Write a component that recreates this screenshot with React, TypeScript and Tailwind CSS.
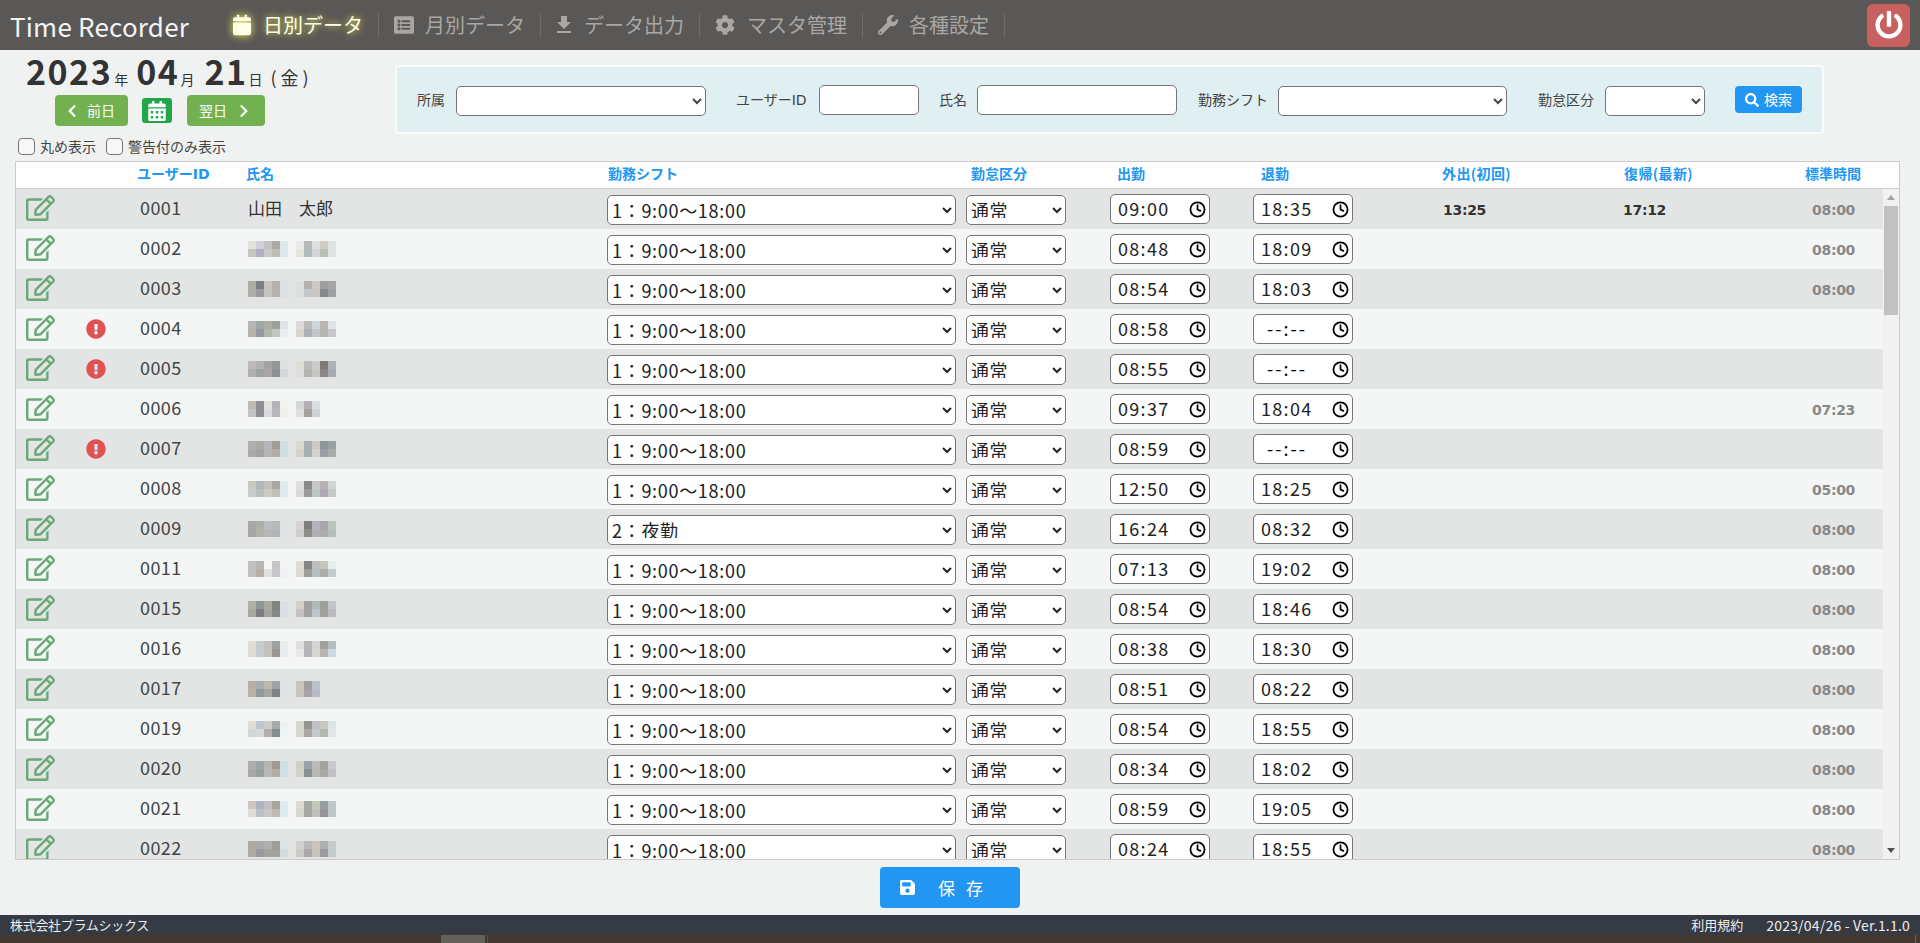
import { FaCalendar, FaListAlt, FaCog, FaWrench, FaPowerOff, FaChevronLeft, FaChevronRight, FaCalendarAlt, FaSearch, FaRegEdit, FaExclamationCircle, FaSave } from 'react-icons/fa';
import { MdFileDownload } from 'react-icons/md';
import { Clock } from 'lucide-react';

type Row = {
  id: string;
  name?: string;
  warn?: boolean;
  shift?: string;
  start: string;
  end: string;
  out?: string;
  back?: string;
  std: string;
  mosaic?: string[];
};

const SHIFT1 = '1：9:00～18:00';

const rows: Row[] = [
  { id: '0001', name: '山田　太郎', start: '09:00', end: '18:35', out: '13:25', back: '17:12', std: '08:00' },
  { id: '0002', start: '08:48', end: '18:09', std: '08:00', mosaic: ['e2e1dc cfd0db c4c3c3 aea8a4 dde9ec', 'c6c5bf b0b1c2 cbcbc6 c0bcb6 dde9ec', 'eaeae8 b6b9b9 dedfde cccbc4 dde1e0', 'e6e5da b0bcbe d0d6d8 b8bdb6 dfe3e2'] },
  { id: '0003', start: '08:54', end: '18:03', std: '08:00', mosaic: ['aeaca6 7b7f82 c6c5c3 b4b3ab dde1e6', 'afaeaa 9a9a9f c4c4c2 b4b4ac dcdfe3', 'dddedf b5b2af cccac8 a09e9f a5a6a9', 'dddee0 c4c7ca c8c5c2 868a8e 9a9fa3'] },
  { id: '0004', warn: true, start: '08:58', end: '--:--', std: '', mosaic: ['b9b7b4 a0a5a8 acaea4 9ca09a e0e4e8', 'b6b3ae 9599a2 b3b5af c3c5bf eaeef2', 'dedad9 bdb9b6 cfd8d8 b9b7b1 e1e5e9', 'd9d5cc adb0b8 c2c6c9 b5b5b3 c4c8cc'] },
  { id: '0005', warn: true, start: '08:55', end: '--:--', std: '', mosaic: ['bdb9ba b3b2b7 a3a3a3 969897 dfe1df', 'b0b0b0 a0a3a0 aca5a8 8f9093 d5d7db', 'ddddd7 b8bbb9 cbcbc7 7f7a76 adb2b7', 'dddddd b2b4b2 c6c6c2 8b868a a8acb2'] },
  { id: '0006', start: '09:37', end: '18:04', std: '07:23', mosaic: ['bfb9b6 8f9095 e0e1da b3b4ba f2f2f0', 'c4c2c2 8e8e94 d8dce0 b7b8bc eff0ec', 'd5d6d6 b6afb7 dbdde2', 'dededa a5a29e cdd1d5'] },
  { id: '0007', warn: true, start: '08:59', end: '--:--', std: '', mosaic: ['b1b0ae ada9a7 b6b6b8 a19c94 cfdfe6', 'adabaa a5a3a2 b4b4b6 b3ada6 cddde4', 'dad9d1 a9b0b2 cec8c4 8e9498 9aa1a5', 'd6d2c9 a5b0b5 d6d1cc 9a9da6 a6adaa'] },
  { id: '0008', start: '12:50', end: '18:25', std: '05:00', mosaic: ['c9c8c3 aeb7bc c0c0bc aca6a2 dfeaee', 'c6cdca b9c1bd cccbc6 c2bdb7 dfeaee', 'e0dfdd 8b8a8a c7c9c9 b9b1b8 d0d4d2', 'dcdad6 9b9b9b b9c6c4 b3a9b4 c4c9c3'] },
  { id: '0009', shift: '2：夜勤', start: '16:24', end: '08:32', std: '08:00', mosaic: ['a9a7a9 abb0a6 bdbcc0 b8b8bb dfe3e4', 'a7a5a6 b0b3a9 b7b6ba b3b3b6 dfe3e4', 'd7d3d3 7f7f7f b6b4ba a8a6a8 bcc2bc', 'cfcccc 8e8e8c b1afb4 adabab b7bdb8'] },
  { id: '0011', start: '07:13', end: '19:02', std: '08:00', mosaic: ['c1c1c3 b8b6b4 f6f6f6 c3c5c7 f4f4f4', 'bfbfc1 b3aea6 e0e1dd c5c7ca eef0f4', 'dfdcd3 858585 bebebe c6c4bb e6efee', 'dcd9d2 9e9e9c b3c0bf adaca5 c4cacd'] },
  { id: '0015', start: '08:54', end: '18:46', std: '08:00', mosaic: ['b0afa8 8f9698 aba99f 7f847f dbdfe5', 'a8a7a2 7d7d83 a4a3a0 868883 dbdfe5', 'd3cfca a0a0a0 b3b9ba 9ba09a c5c5c7', 'c5c0c4 a2a2a0 c0c5c9 a0a39c bbbbbd'] },
  { id: '0016', start: '08:38', end: '18:30', std: '08:00', mosaic: ['e0ddd4 c3ccd1 c2c2bb 9ea2a1 e9edee', 'dedbd0 c7ced3 c4c2ba 999896 e7ebee', 'e0dede b3b5b6 d5d6d4 a59f9b b3bcc3', 'ebe8e8 b4b5b9 d6d7d2 bdb3ae ccd8e0'] },
  { id: '0017', start: '08:51', end: '08:22', std: '08:00', mosaic: ['b5afa5 a7adb1 bdb8ae 9ea3a6 dfe3e6', 'bbb0a4 919a9e a7a5a1 7f8184 e0e2e4', 'c9c7bd a09e9f b7c4cc', 'c8c6bc a5a3a4 b9bcc7'] },
  { id: '0019', start: '08:54', end: '18:55', std: '08:00', mosaic: ['e0ddd8 bec5d2 ceccc7 a5acab ecf2f2', 'd1d6d9 d8d9dd b1adab 868e8f edf4f6', 'd7d7cf 959390 bfc0c4 c9c9c0 dde3e1', 'd6d7d1 aba7a4 c4c9ca b2b8b0 e0e8e6'] },
  { id: '0020', start: '08:34', end: '18:02', std: '08:00', mosaic: ['b0aeac 9da5a8 b8b4b4 a1988f cfdfe7', 'a9a8a6 979f9f b9b9b7 b4ada5 cfdfe7', 'cfcdc8 9ca3a8 bdbbb9 a3a4a0 c8c8ce', 'd3d1cb 8a9096 b9b9b3 a7aaa6 c1c1c5'] },
  { id: '0021', start: '08:59', end: '19:05', std: '08:00', mosaic: ['cfc7bf afb3c2 c2bfc4 aba39d dcecf0', 'dfdcd5 bac1cb c9c8c6 c2bbb3 dcecf0', 'dddbd1 a6a8a3 c3c8bd 939fa3 bfc6c7', 'd7d7d1 a7a7a3 bec0ba 979498 c0c5c9'] },
  { id: '0022', start: '08:24', end: '18:55', std: '08:00', mosaic: ['adaaa6 a9a9ae b0aeae 9c9c98 dce3e6', 'aeaca4 9a9a9e 9fa29d a0a39c d5dcdd', 'd0d0cc b9b9bb cac6bc afb0b2 c9cbcb', 'c8cbc6 aba8ab c4c4bc 9c9ca0 c4c9c9'] },
];

const GRID = 'grid grid-cols-[70px_52px_108px_361px_359px_144px_143px_188px_181px_183px_78px]';

function Mosaic({ lines }: { lines: string[] }) {
  const block = (a: string, b: string) => (
    <div className="flex flex-col">
      {[a, b].map((line, i) => (
        <div key={i} className="flex">
          {line.split(' ').map((c, j) => (
            <div key={j} className="w-[8px] h-[8px]" style={{ backgroundColor: `#${c}` }} />
          ))}
        </div>
      ))}
    </div>
  );
  return (
    <div className="flex gap-[8px]">
      {block(lines[0], lines[1])}
      {block(lines[2], lines[3])}
    </div>
  );
}

function TimeBox({ value }: { value: string }) {
  return (
    <div className="flex items-center justify-between w-[100px] h-[30px] rounded-[5px] border border-[#767676] bg-white pl-[7px] pr-[3px] text-[18px] tracking-[1.3px] text-[#222]">
      {value === '--:--' ? <span className="pl-[6px] pb-[2px] text-black tracking-[2px]">{value}</span> : <span className="pb-[2px]">{value}</span>}
      <Clock size={17} strokeWidth={2.5} className="text-black" />
    </div>
  );
}

function NavItem({ icon, label, active }: { icon: React.ReactNode; label: string; active?: boolean }) {
  return (
    <div className={`flex items-center h-[25px] px-[15px] border-r border-[#6f6d6b] text-[20px] ${active ? 'text-[#ffffe6] [text-shadow:0_0_7px_#eeee55]' : 'text-[#a9a7a5]'}`}>
      {icon}
      <span className="whitespace-nowrap">{label}</span>
    </div>
  );
}

export default function App() {
  return (
    <div className="h-[943px] w-[1920px] overflow-hidden flex flex-col bg-[#f0f2f1] text-[#333] font-['Noto_Sans_CJK_JP','Noto_Sans',sans-serif]">
      {/* header */}
      <header className="h-[50px] shrink-0 bg-[#5a5856] flex items-center">
        <div className="w-[218px] pl-[10px] text-[26px] tracking-[0.2px] text-[#f4f4f4] whitespace-nowrap">Time Recorder</div>
        <NavItem active icon={<FaCalendar className="w-[18px] h-[22px] mr-[12px] text-[#ffffe6] drop-shadow-[0_0_4px_#eeee55]" />} label="日別データ" />
        <NavItem icon={<FaListAlt className="w-[20px] h-[22px] mr-[11px]" />} label="月別データ" />
        <NavItem icon={<MdFileDownload className="w-[24px] h-[24px] -ml-[4px] mr-[8px]" />} label="データ出力" />
        <NavItem icon={<FaCog className="w-[20px] h-[20px] mr-[12px]" />} label="マスタ管理" />
        <NavItem icon={<FaWrench className="w-[20px] h-[20px] mr-[11px]" />} label="各種設定" />
        <button className="ml-auto mr-[10px] w-[43px] h-[43px] rounded-[6px] bg-[#c96060] flex items-center justify-center">
          <FaPowerOff className="w-[28px] h-[30px] text-white" />
        </button>
      </header>

      {/* date + search */}
      <div className="h-[111px] shrink-0 flex">
        <div className="w-[395px] shrink-0 flex flex-col pt-[1px]">
          <div className="h-[44px] pl-[26px] flex items-baseline whitespace-nowrap">
            <span className="text-[34px] font-bold tracking-[1.5px] leading-[40px]">2023</span>
            <span className="text-[14px] ml-[2px]">年</span>
            <span className="text-[34px] font-bold tracking-[1.5px] leading-[40px] ml-[8px]">04</span>
            <span className="text-[14px] ml-[1px]">月</span>
            <span className="text-[34px] font-bold tracking-[1.5px] leading-[40px] ml-[10px]">21</span>
            <span className="text-[14px] ml-[1px]">日</span>
            <span className="text-[18px] ml-[8px] tracking-[4px]">(金)</span>
          </div>
          <div className="flex items-center pl-[55px] h-[31px] text-[14px] text-white">
            <button className="w-[73px] h-[31px] rounded-[4px] bg-[#72b14f] flex items-center pl-[12px]">
              <FaChevronLeft className="w-[10px] h-[14px] mr-[10px]" />前日
            </button>
            <button className="w-[30px] h-[25px] ml-[14px] rounded-[3px] bg-[#22a64a] flex items-center justify-center">
              <FaCalendarAlt className="w-[18px] h-[20px]" />
            </button>
            <button className="w-[78px] h-[31px] ml-[15px] rounded-[4px] bg-[#72b14f] flex items-center pl-[12px]">
              翌日<FaChevronRight className="w-[10px] h-[14px] ml-[12px]" />
            </button>
          </div>
          <div className="mt-[12px] h-[17px] flex items-center pl-[18px] text-[14px] text-[#444]">
            <input type="checkbox" className="appearance-none w-[17px] h-[17px] rounded-[4px] border-[1.5px] border-[#767676] bg-[#f8f8f8]" />
            <span className="ml-[5px]">丸め表示</span>
            <input type="checkbox" className="appearance-none w-[17px] h-[17px] ml-[10px] rounded-[4px] border-[1.5px] border-[#767676] bg-[#f8f8f8]" />
            <span className="ml-[5px]">警告付のみ表示</span>
          </div>
        </div>

        <div className="mt-[15px] w-[1429px] h-[69px] rounded-[4px] border-2 border-[#fafcfc] bg-[#dfeff2] flex items-center pl-[20px] text-[14px] text-[#444]">
          <span>所属</span>
          <select className="ml-[11px] mt-[2px] w-[250px] h-[30px] rounded-[5px] border border-[#767676] bg-white" />
          <span className="ml-[30px] w-[72px] whitespace-nowrap">ユーザー<span className="font-['DejaVu_Sans',sans-serif] text-[14px]">ID</span></span>
          <input className="ml-[11px] w-[100px] h-[30px] rounded-[5px] border border-[#767676] bg-white" />
          <span className="ml-[20px]">氏名</span>
          <input className="ml-[10px] w-[200px] h-[30px] rounded-[5px] border border-[#767676] bg-white" />
          <span className="ml-[21px]">勤務シフト</span>
          <select className="ml-[10px] mt-[2px] w-[229px] h-[30px] rounded-[5px] border border-[#767676] bg-white" />
          <span className="ml-[31px]">勤怠区分</span>
          <select className="ml-[11px] mt-[2px] w-[100px] h-[30px] rounded-[5px] border border-[#767676] bg-white" />
          <button className="ml-[30px] w-[67px] h-[27px] rounded-[4px] bg-[#2196f3] text-white flex items-center justify-center">
            <FaSearch className="w-[14px] h-[14px] mr-[5px]" />検索
          </button>
        </div>
      </div>

      {/* table */}
      <div className="ml-[15px] w-[1885px] h-[699px] shrink-0 border border-[#ccc] flex flex-col overflow-hidden">
        <div className={`${GRID} h-[27px] shrink-0 bg-white border-b border-[#ccc] items-center pb-[3px] text-[14px] font-bold text-[#2196f3] whitespace-nowrap`}>
          <div />
          <div />
          <div className="-ml-[1px]">ユーザー<span className="font-['DejaVu_Sans',sans-serif]">ID</span></div>
          <div>氏名</div>
          <div className="pl-[1px]">勤務シフト</div>
          <div className="pl-[5px]">勤怠区分</div>
          <div className="pl-[7px]">出勤</div>
          <div className="pl-[8px]">退勤</div>
          <div className="pl-[1px] tracking-[0.4px]">外出(初回)</div>
          <div className="pl-[2px] tracking-[0.4px]">復帰(最新)</div>
          <div>標準時間</div>
        </div>
        <div className="flex flex-1 min-h-0">
          <div className="flex-1 overflow-hidden">
            {rows.map((r, i) => (
              <div key={r.id} className={`${GRID} h-[40px] items-center ${i % 2 === 0 ? 'bg-[#e3e5e4]' : 'bg-[#f4f6f5]'}`}>
                <div className="pl-[10px] -mt-[3px]">
                  <FaRegEdit className="w-[29px] h-[26px] text-[#6aa875]" />
                </div>
                <div>{r.warn && <FaExclamationCircle className="w-[20px] h-[20px] text-[#e05252]" />}</div>
                <div className="pl-[2px] pb-[3px] text-[18px] tracking-[0.4px] text-[#444]">{r.id}</div>
                <div className="pl-[2px]">
                  {r.mosaic ? <Mosaic lines={r.mosaic} /> : <span className="block pb-[3px] text-[17px] text-[#333]">{r.name}</span>}
                </div>
                <div>
                  <select defaultValue={r.shift ?? SHIFT1} className="mt-[2px] block w-[349px] h-[30px] pb-[6px] rounded-[5px] border border-[#767676] bg-white text-[18px] tracking-[0.7px] text-[#222]">
                    <option>{SHIFT1}</option>
                    <option>2：夜勤</option>
                  </select>
                </div>
                <div>
                  <select className="mt-[2px] block w-[100px] h-[30px] pb-[6px] rounded-[5px] border border-[#767676] bg-white text-[18px] tracking-[0.6px] text-[#222]">
                    <option>通常</option>
                  </select>
                </div>
                <div><TimeBox value={r.start} /></div>
                <div><TimeBox value={r.end} /></div>
                <div className="pl-[2px] pt-[2px] text-[14px] font-bold text-[#333] font-['DejaVu_Sans',sans-serif] tracking-[-0.3px]">{r.out}</div>
                <div className="pl-[1px] pt-[2px] text-[14px] font-bold text-[#333] font-['DejaVu_Sans',sans-serif] tracking-[-0.3px]">{r.back}</div>
                <div className="pl-[7px] pt-[2px] text-[14px] font-bold text-[#888] font-['DejaVu_Sans',sans-serif] tracking-[-0.3px]">{r.std}</div>
              </div>
            ))}
          </div>
          {/* scrollbar */}
          <div className="w-[16px] shrink-0 bg-[#f1f1f1] flex flex-col items-center">
            <div className="h-[17px] flex items-center justify-center">
              <div className="w-0 h-0 border-x-[4px] border-x-transparent border-b-[5px] border-b-[#a3a3a3]" />
            </div>
            <div className="w-[14px] h-[109px] bg-[#c1c1c1]" />
            <div className="mt-auto h-[17px] flex items-center justify-center">
              <div className="w-0 h-0 border-x-[4px] border-x-transparent border-t-[5px] border-t-[#505050]" />
            </div>
          </div>
        </div>
      </div>

      {/* save */}
      <div className="flex-1 flex justify-center pr-[20px] pt-[7px]">
        <button className="w-[140px] h-[41px] rounded-[4px] bg-[#2196f3] text-white text-[17px] flex items-center pl-[19px]">
          <FaSave className="w-[17px] h-[17px] mr-[22px]" />
          <span className="tracking-[11px] whitespace-nowrap">保存</span>
        </button>
      </div>

      {/* footer */}
      <footer className="h-[20px] shrink-0 bg-[#363a42] flex items-center px-[10px] text-[13px] text-[#eee] whitespace-nowrap">
        <span className="tracking-[-0.3px]">株式会社プラムシックス</span>
        <span className="ml-auto">利用規約</span>
        <span className="ml-[23px] text-[14px] tracking-[0.2px]">2023/04/26 - Ver.1.1.0</span>
      </footer>
      <div className="h-[8px] shrink-0 bg-[#42382f] flex overflow-hidden">
        <div className="ml-[441px] w-[44px] bg-[#66605b]" />
        <div className="ml-[2px] w-[1px] bg-[#57504a]" />
        <div className="ml-auto mr-[4px] w-[1px] bg-[#6b635c]" />
      </div>
    </div>
  );
}
